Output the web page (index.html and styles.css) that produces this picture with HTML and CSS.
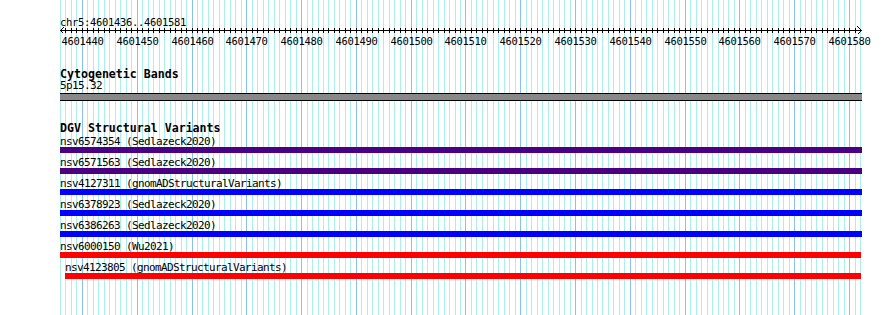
FILE: index.html
```html
<!DOCTYPE html>
<html lang="en">

<head>
    <meta charset="UTF-8">
    <title>Genome Browser</title>
    <link rel="stylesheet" href="styles.css">
</head>

<body>
    <div class="browser">
        <svg class="guides" id="guides" width="802" height="315"></svg>
        <div class="tracks">
            <div class="pos">chr5:4601436..4601581</div>
            <svg class="ruler" id="ruler" width="830" height="20"></svg>

            <div class="track cyto">
                <div class="track-title">Cytogenetic Bands</div>
                <div class="feat-label">5p15.32</div>
                <div class="band"></div>
            </div>

            <div class="track dgv">
                <div class="track-title">DGV Structural Variants</div>
                <div class="feats">
                    <div class="feat">
                        <div class="feat-label">nsv6574354 (Sedlazeck2020)</div>
                        <div class="bar purple"></div>
                    </div>
                    <div class="feat">
                        <div class="feat-label">nsv6571563 (Sedlazeck2020)</div>
                        <div class="bar purple"></div>
                    </div>
                    <div class="feat">
                        <div class="feat-label">nsv4127311 (gnomADStructuralVariants)</div>
                        <div class="bar blue"></div>
                    </div>
                    <div class="feat">
                        <div class="feat-label">nsv6378923 (Sedlazeck2020)</div>
                        <div class="bar blue"></div>
                    </div>
                    <div class="feat">
                        <div class="feat-label">nsv6386263 (Sedlazeck2020)</div>
                        <div class="bar blue"></div>
                    </div>
                    <div class="feat">
                        <div class="feat-label">nsv6000150 (Wu2021)</div>
                        <div class="bar red"></div>
                    </div>
                    <div class="feat shifted">
                        <div class="feat-label">nsv4123805 (gnomADStructuralVariants)</div>
                        <div class="bar red"></div>
                    </div>
                </div>
            </div>
        </div>
    </div>

    <script>
        const NS = 'http://www.w3.org/2000/svg';
        const START = 4601436;
        const BASES = 146;
        const WIDTH = 800;

        function xAt(k) {
            return Math.round(k * WIDTH / BASES) + 0.5;
        }

        function line(parent, x1, y1, x2, y2, cls) {
            const l = document.createElementNS(NS, 'line');
            l.setAttribute('x1', x1);
            l.setAttribute('y1', y1);
            l.setAttribute('x2', x2);
            l.setAttribute('y2', y2);
            if (cls) l.setAttribute('class', cls);
            parent.appendChild(l);
        }

        // base guidelines, darker every 10 bases
        const guides = document.getElementById('guides');
        for (let k = 0; k <= BASES; k++) {
            const x = xAt(k);
            line(guides, x, 0, x, 315, (START + k) % 10 === 0 ? 'guide major' : 'guide');
        }

        // ruler
        const ruler = document.getElementById('ruler');
        line(ruler, 0, 3.5, 801, 3.5);
        line(ruler, 0.5, 3.5, 3.5, 0.5);
        line(ruler, 0.5, 3.5, 3.5, 6.5);
        line(ruler, 801.5, 3.5, 797.5, -0.5);
        line(ruler, 801.5, 3.5, 797.5, 7.5);
        for (let k = 1; k < BASES; k++) {
            const x = xAt(k);
            line(ruler, x, 1, x, 6);
            if ((START + k) % 10 === 0) {
                const t = document.createElementNS(NS, 'text');
                t.setAttribute('x', x);
                t.setAttribute('y', 17.5);
                t.textContent = START + k;
                ruler.appendChild(t);
            }
        }
    </script>
</body>

</html>
```

FILE: styles.css
```css
* {
    margin: 0;
    padding: 0;
    box-sizing: border-box;
}

body {
    background: #ffffff;
    color: #000000;
    font-family: 'DejaVu Sans Mono', 'Liberation Mono', monospace;
    font-size: 10px;
}

.browser {
    position: relative;
    width: 890px;
    height: 315px;
    overflow: hidden;
    padding: 17px 0 0 60px;
}

.guides {
    position: absolute;
    left: 60px;
    top: 0;
    shape-rendering: crispEdges;
}

.guide {
    stroke: #aaeeee;
    stroke-width: 1;
}

.guide.major {
    stroke: #88c0ee;
}

.tracks {
    position: relative;
    width: 802px;
}

.pos {
    font-size: 10.5px;
    letter-spacing: -0.32px;
    line-height: 10px;
    height: 10px;
    white-space: nowrap;
}

.ruler {
    display: block;
    overflow: visible;
}

.ruler line {
    stroke: #000000;
    stroke-width: 1;
    shape-rendering: crispEdges;
}

.ruler text {
    font-family: 'DejaVu Sans Mono', 'Liberation Mono', monospace;
    font-size: 10.5px;
    letter-spacing: -0.32px;
    text-anchor: middle;
    fill: #000000;
}

.track {
    margin-top: 21px;
}

.track-title {
    font-weight: bold;
    font-size: 11.6px;
    line-height: 12px;
    height: 12px;
    white-space: nowrap;
}

.feat-label {
    font-size: 11px;
    letter-spacing: -0.62px;
    line-height: 10px;
    height: 10px;
    white-space: nowrap;
}

.cyto .feat-label {
    margin-top: 1px;
}

.band {
    margin-top: 2px;
    height: 8px;
    width: 802px;
    background: #888888;
    border-top: 1px solid #000000;
    border-bottom: 1px solid #000000;
}

.feats {
    margin-top: 3px;
}

.feat {
    margin-bottom: 5px;
}

.bar {
    height: 6px;
    width: 802px;
}

.bar.purple {
    background: #4b0082;
}

.bar.blue {
    background: #0000ff;
}

.bar.red {
    background: #ff0000;
    width: 801px;
}

.feat.shifted .feat-label {
    padding-left: 5px;
}

.feat.shifted .bar {
    margin-left: 5px;
    width: 796px;
}
```
